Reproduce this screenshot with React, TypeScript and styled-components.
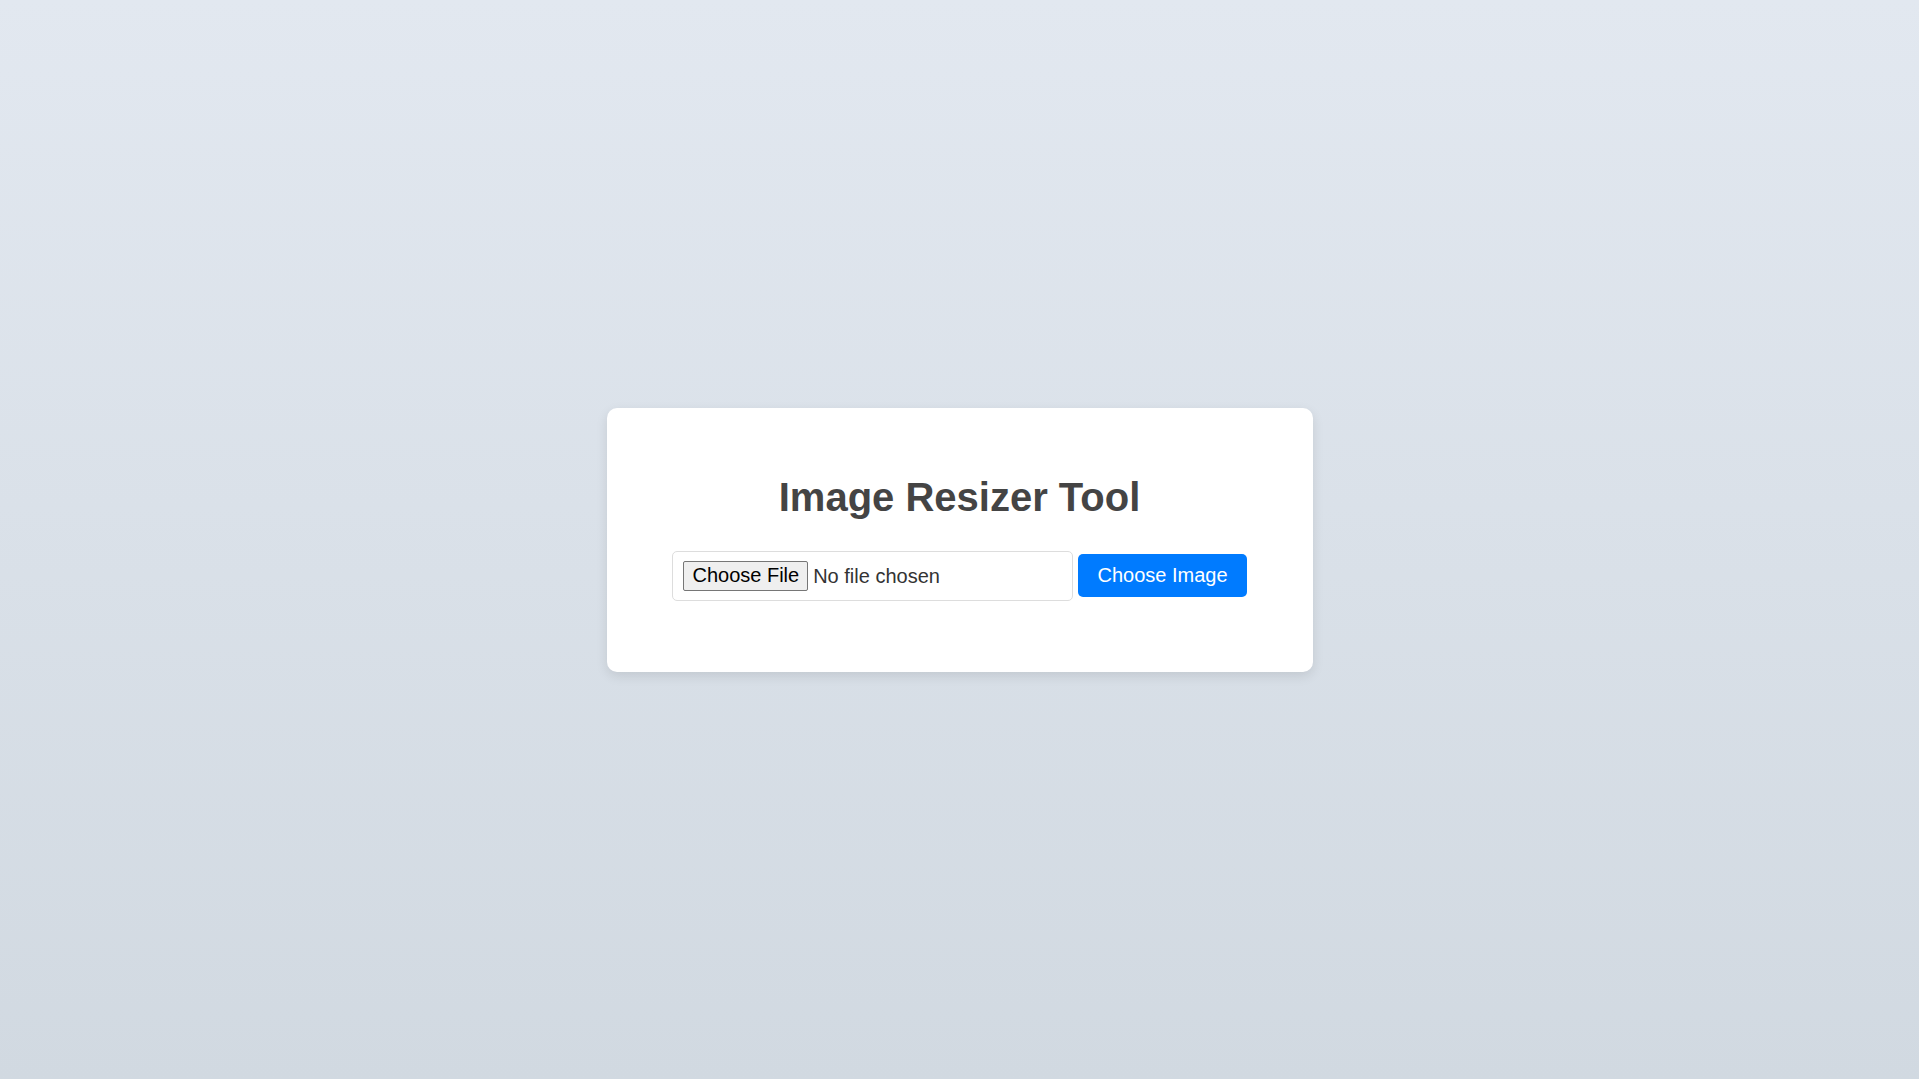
import React from 'react';
import styled, { createGlobalStyle } from 'styled-components';

const GlobalStyle = createGlobalStyle`
  html, body {
    margin: 0;
    padding: 0;
  }

  body {
    font-family: "Liberation Sans", Arial, sans-serif;
    background: linear-gradient(to bottom, #e2e8f0, #d1d9e1);
    min-height: 100vh;
  }
`;

const Page = styled.div`
  display: flex;
  align-items: center;
  justify-content: center;
  height: 100vh;
`;

const Card = styled.div`
  box-sizing: border-box;
  width: 706px;
  height: 264px;
  padding: 40px;
  background: #fff;
  border-radius: 10px;
  box-shadow: 0 4px 12px rgba(0, 0, 0, 0.1);
  text-align: center;
`;

const Title = styled.h1`
  margin: 26px 0 31px;
  font-size: 40px;
  line-height: 46px;
  font-weight: bold;
  color: #444;
`;

const UploadRow = styled.div`
  display: flex;
  align-items: center;
  justify-content: center;
  gap: 5px;
`;

const FileInput = styled.input`
  box-sizing: border-box;
  width: 401px;
  height: 50px;
  padding: 9px 10px 11px;
  border: 1px solid #ddd;
  border-radius: 5px;
  font-family: "Liberation Sans", Arial, sans-serif;
  font-size: 20px;
  color: #333;
  background: #fff;

  &::file-selector-button {
    font-family: "Liberation Sans", Arial, sans-serif;
    font-size: 20px;
    color: #000;
    height: 30px;
    padding: 0 8px;
    margin-right: 5px;
    background: #efefef;
    border: 1px solid #767676;
    border-radius: 2px;
  }
`;

const ChooseButton = styled.button`
  box-sizing: border-box;
  height: 43px;
  padding: 0 19px;
  border: none;
  border-radius: 5px;
  background: #007bff;
  color: #fff;
  font-family: "Liberation Sans", Arial, sans-serif;
  font-size: 20px;
  cursor: pointer;
`;

const App: React.FC = () => {
  return (
    <>
      <GlobalStyle />
      <Page>
        <Card>
          <Title>Image Resizer Tool</Title>
          <UploadRow>
            <FileInput type="file" accept="image/*" />
            <ChooseButton type="button">Choose Image</ChooseButton>
          </UploadRow>
        </Card>
      </Page>
    </>
  );
};

export default App;
